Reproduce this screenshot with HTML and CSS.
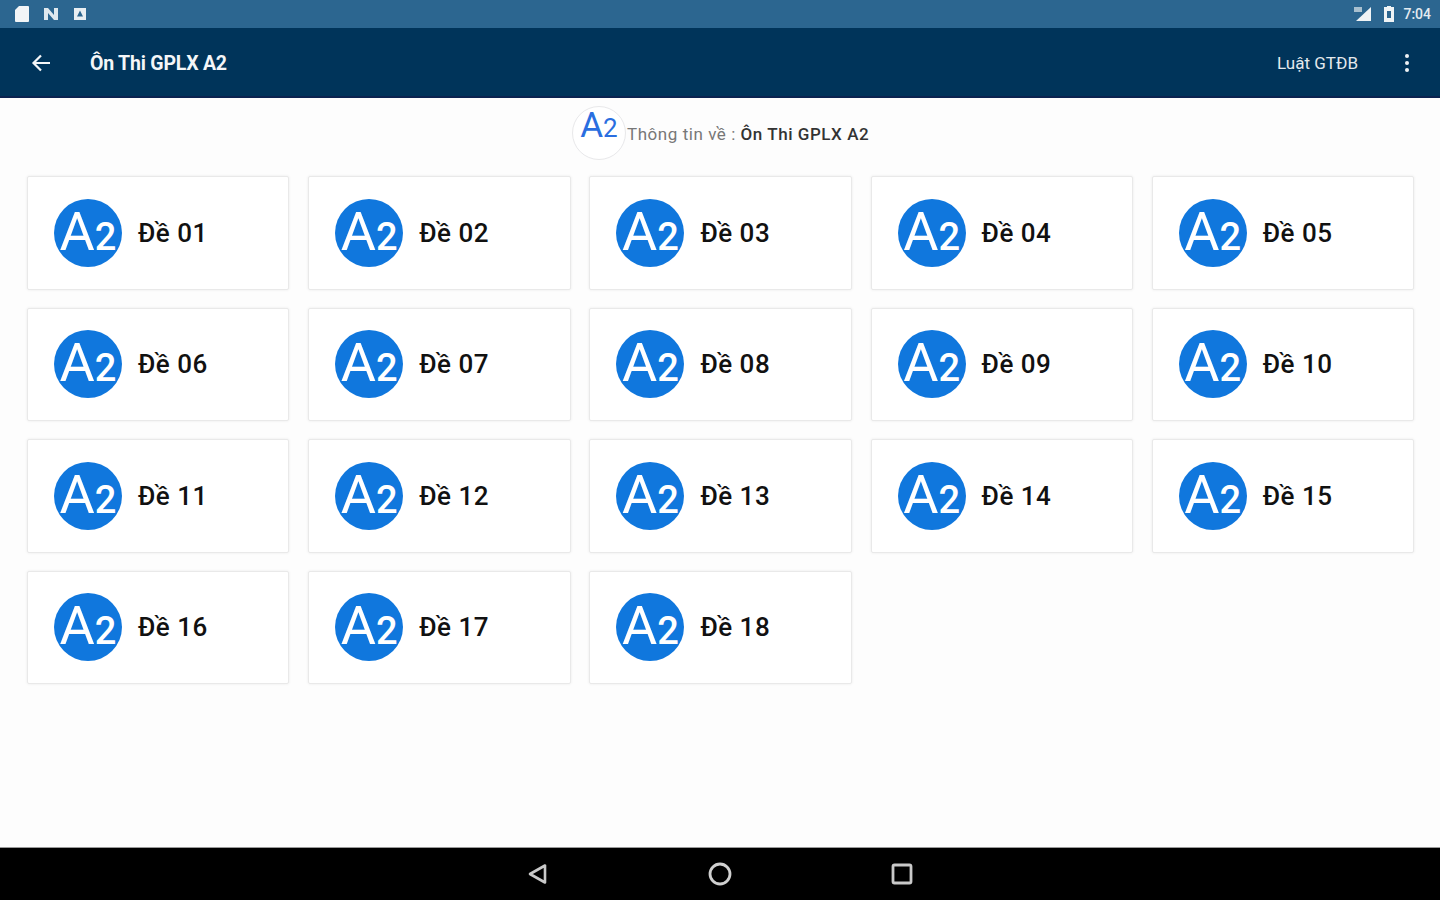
FILE: index.html
```html
<!DOCTYPE html>
<html>
	<head>
		<meta charset="utf-8">
		<title>Ôn Thi GPLX A2</title>
		<link rel="stylesheet" href="styles.css">
	</head>
	<body>
		<div class="statusBar">
			<div class="statusLeft">
				<svg width="16" height="18" viewBox="0 0 16 18"><path d="M5 1h9a1 1 0 0 1 1 1v14a1 1 0 0 1-1 1H2a1 1 0 0 1-1-1V5z" fill="#f2f5f7"/></svg>
				<svg width="18" height="16" viewBox="0 0 18 16"><path d="M2 2h4l6 7V2h4v12h-4L6 7v7H2z" fill="#dfe8ee"/></svg>
				<svg width="16" height="16" viewBox="0 0 16 16"><path fill-rule="evenodd" d="M2 2h12v12H2zM8 4.500 5 10.500h6z" fill="#e8eef2"/></svg>
			</div>
			<div class="statusRight">
				<svg width="18" height="16" viewBox="0 0 18 16"><path d="M17 1v14H2z" fill="#f0f4f6"/><path d="M0 1h8v5H0z" fill="#a9c0cf"/></svg>
				<svg class="battery" width="12" height="16" viewBox="0 0 12 16"><path fill-rule="evenodd" d="M4 0h4v1h3v15H1V1h3zM4 5v7h4V5z" fill="#f0f4f6"/></svg>
				<span class="clock">7:04</span>
			</div>
		</div>
		<div class="appBar">
			<svg class="backIcon" width="22" height="22" viewBox="0 0 22 22"><path d="M20 11H4M11 3.500 3.500 11l7.500 7.500" fill="none" stroke="#f4f6f8" stroke-width="2.200"/></svg>
			<div class="appTitle">Ôn Thi GPLX A2</div>
			<div class="appAction">Luật GTĐB</div>
			<div class="moreIcon"><i></i><i></i><i></i></div>
		</div>
		<div class="content">
			<div class="info">
				<div class="infoLogo">A<span>2</span></div>
				<div class="infoText">Thông tin về : <b>Ôn Thi GPLX A2</b></div>
			</div>
			<div class="grid">
				<div class="card"><div class="logo">A<span>2</span></div><div class="name">Đề 01</div></div>
				<div class="card"><div class="logo">A<span>2</span></div><div class="name">Đề 02</div></div>
				<div class="card"><div class="logo">A<span>2</span></div><div class="name">Đề 03</div></div>
				<div class="card"><div class="logo">A<span>2</span></div><div class="name">Đề 04</div></div>
				<div class="card"><div class="logo">A<span>2</span></div><div class="name">Đề 05</div></div>
				<div class="card"><div class="logo">A<span>2</span></div><div class="name">Đề 06</div></div>
				<div class="card"><div class="logo">A<span>2</span></div><div class="name">Đề 07</div></div>
				<div class="card"><div class="logo">A<span>2</span></div><div class="name">Đề 08</div></div>
				<div class="card"><div class="logo">A<span>2</span></div><div class="name">Đề 09</div></div>
				<div class="card"><div class="logo">A<span>2</span></div><div class="name">Đề 10</div></div>
				<div class="card"><div class="logo">A<span>2</span></div><div class="name">Đề 11</div></div>
				<div class="card"><div class="logo">A<span>2</span></div><div class="name">Đề 12</div></div>
				<div class="card"><div class="logo">A<span>2</span></div><div class="name">Đề 13</div></div>
				<div class="card"><div class="logo">A<span>2</span></div><div class="name">Đề 14</div></div>
				<div class="card"><div class="logo">A<span>2</span></div><div class="name">Đề 15</div></div>
				<div class="card"><div class="logo">A<span>2</span></div><div class="name">Đề 16</div></div>
				<div class="card"><div class="logo">A<span>2</span></div><div class="name">Đề 17</div></div>
				<div class="card"><div class="logo">A<span>2</span></div><div class="name">Đề 18</div></div>
			</div>
		</div>
		<div class="navBar">
			<svg width="24" height="24" viewBox="0 0 24 24"><path d="M19 3.500v17L4 12z" fill="none" stroke="#c9c9c9" stroke-width="2.600" stroke-linejoin="round"/></svg>
			<svg width="24" height="24" viewBox="0 0 24 24"><circle cx="12" cy="12" r="10" fill="none" stroke="#d0d0d0" stroke-width="2.800"/></svg>
			<svg width="24" height="24" viewBox="0 0 24 24"><rect x="3" y="3" width="18" height="18" rx="1.500" fill="none" stroke="#c9c9c9" stroke-width="2.800"/></svg>
		</div>
	</body>
</html>
```

FILE: styles.css
```css
*{margin: 0;padding: 0;box-sizing: border-box;}
body{
	width: 1440px;
	height: 900px;
	overflow: hidden;
	background: #fdfdfd;
	font-family: Roboto, "Liberation Sans", sans-serif;
	display: flex;
	flex-direction: column;
}
svg{display: block;}
.statusBar{
	height: 28px;
	background: #2c6690;
	display: flex;
	justify-content: space-between;
	align-items: center;
	padding: 0 9px 0 14px;
}
.statusLeft,.statusRight{display: flex;align-items: center;}
.statusLeft{gap: 12px;}
.statusRight{gap: 8px;}
.battery{margin-left: 3px;}
.clock{font-size: 14px;font-weight: 500;color: #e4ebf0;}
.appBar{
	height: 70px;
	background: #00345a;
	border-bottom: 2px solid #0b2350;
	display: flex;
	align-items: center;
	padding: 2px 29px 0 30px;
	color: #f4f6f8;
}
.appTitle{margin-left: 38px;font-size: 19.500px;font-weight: 700;letter-spacing: -0.2px;}
.appAction{margin-left: auto;font-size: 17px;font-weight: 400;color: #e4e9ed;}
.moreIcon{
	margin-left: 45px;
	width: 8px;
	display: flex;
	flex-direction: column;
	align-items: center;
	gap: 3px;
}
.moreIcon i{display: block;width: 4px;height: 4px;border-radius: 50%;background: #eef1f4;}
.content{flex: 1;}
.info{
	height: 78px;
	padding: 8px 0 0 572px;
	display: flex;
}
.infoLogo{
	width: 54px;
	height: 54px;
	border: 1px solid #e8e8ea;
	border-radius: 50%;
	background: #fff;
	color: #2a6ee0;
	font-size: 35px;
	line-height: 38px;
	text-align: center;
	letter-spacing: 0;
}
.infoLogo span{font-size: 26px;}
.infoText{
	margin: 18px 0 0 1px;
	font-size: 17px;
	line-height: 20px;
	letter-spacing: 0.55px;
	color: #777;
}
.infoText b{font-weight: 500;color: #333;}
.grid{
	display: grid;
	grid-template-columns: repeat(5,262.400px);
	grid-auto-rows: 113.500px;
	column-gap: 18.800px;
	row-gap: 18px;
	padding-left: 27px;
}
.card{
	background: #fff;
	border: 1px solid #e9e9e9;
	border-radius: 2px;
	box-shadow: 0 0 3px rgba(0,0,0,.08);
	display: flex;
	align-items: center;
	padding-left: 26px;
}
.logo{
	flex: none;
	width: 68px;
	height: 68px;
	border-radius: 50%;
	background: #1077dd;
	color: #fff;
	font-size: 54px;
	line-height: 66px;
	text-align: center;
	white-space: nowrap;
	overflow: hidden;
}
.logo span{font-size: 38px;font-weight: 500;}
.name{
	margin-left: 16px;
	font-size: 26px;
	font-weight: 500;
	letter-spacing: 0.5px;
	color: #111;
}
.navBar{
	height: 53px;
	background: #000;
	border-top: 1px solid #9a9a9a;
	display: flex;
	justify-content: center;
	align-items: center;
	gap: 158px;
}
```
